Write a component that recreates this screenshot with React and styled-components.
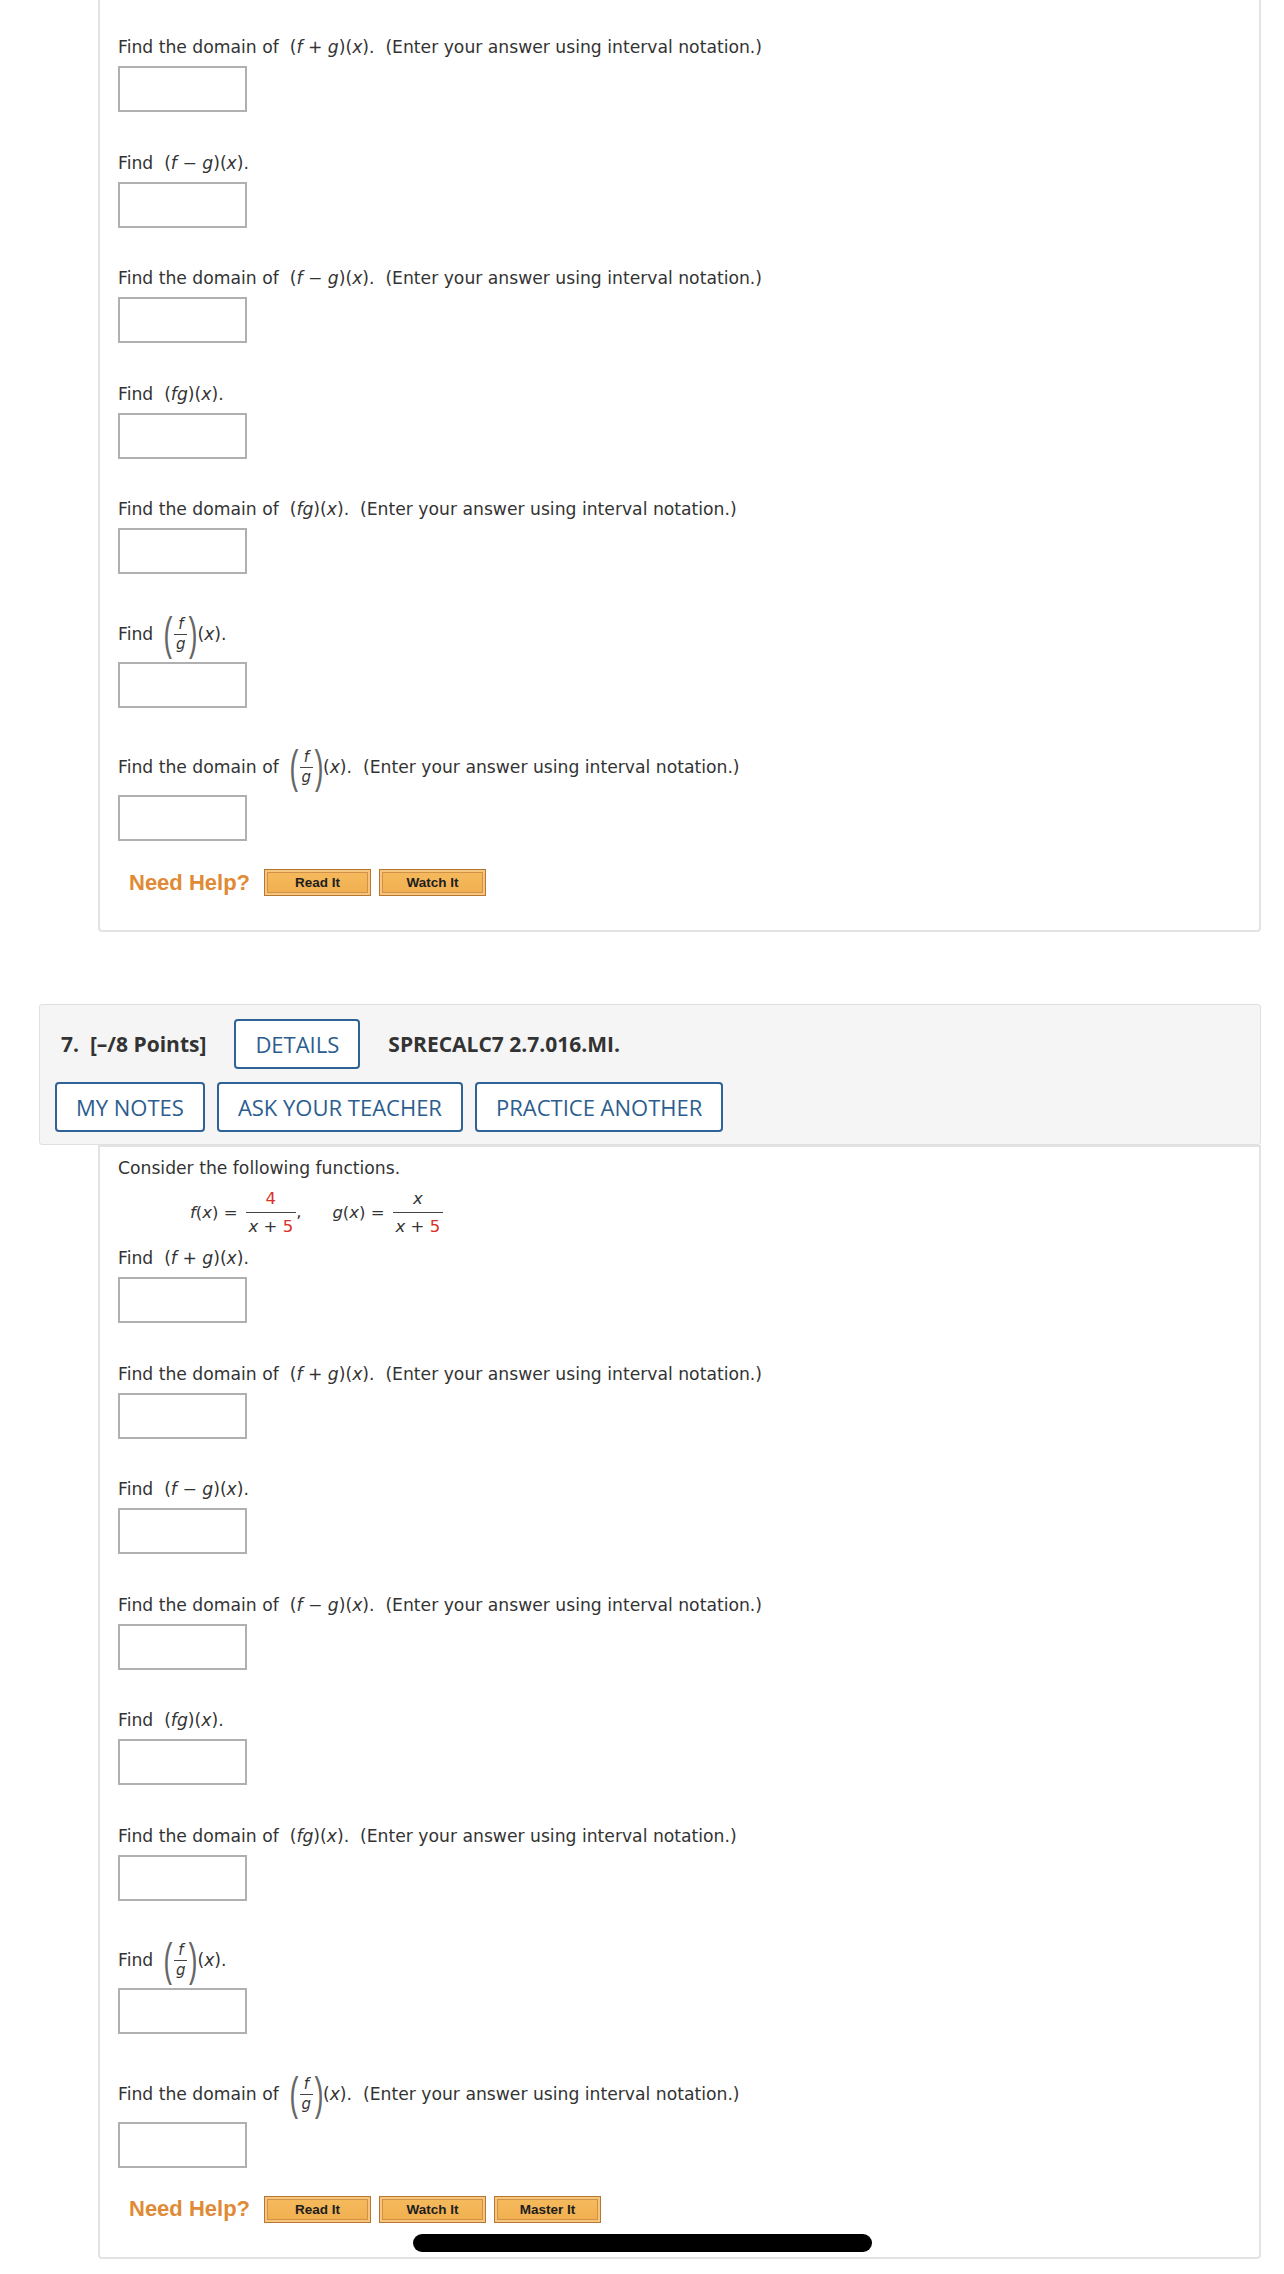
import React from "react";
import styled, { createGlobalStyle } from "styled-components";

// WebAssign style question page (mobile capture)

const GlobalStyle = createGlobalStyle`
  body {
    margin: 0;
    background: #fff;
    font-family: "DejaVu Sans", Verdana, sans-serif;
    color: #333;
  }
`;

const Page = styled.div`
  width: 1222px;
  padding-left: 39px;
  padding-bottom: 17px;
`;

const Card = styled.div`
  margin-left: 59px;
  border: 2px solid #e3e3e3;
  border-top: ${(p) => (p.$cut ? "none" : "2px solid #e3e3e3")};
  border-radius: 0 0 4px 4px;
  padding: ${(p) => (p.$cut ? "35px" : "9px")} 20px 34px 18px;
  box-sizing: border-box;
`;

const Header = styled.div`
  margin-top: 72px;
  background: #f5f5f5;
  border: 1px solid #e0e0e0;
  border-radius: 3px;
  padding: 14px 15px 12px 15px;
  display: flex;
  flex-direction: column;
  gap: 13px;
  font-family: "Open Sans", "Liberation Sans", sans-serif;
`;

const HeaderRow = styled.div`
  display: flex;
  align-items: center;
  gap: ${(p) => p.$gap || 11}px;
  padding-left: ${(p) => p.$indent || 0}px;
`;

const Title = styled.span`
  font-weight: 700;
  font-size: 21px;
  color: #333;
  white-space: pre;
`;

const OutlineButton = styled.button`
  height: 50px;
  box-sizing: border-box;
  padding: 0 19px;
  border: 2px solid #2f6296;
  border-radius: 4px;
  background: #fff;
  color: #2b5d8f;
  font-family: "Open Sans", "Liberation Sans", sans-serif;
  font-size: 22px;
  font-weight: 400;
`;

const Line = styled.div`
  font-size: 17.2px;
  line-height: 24px;
  min-height: ${(p) => (p.$tall ? "42px" : "24px")};
  display: flex;
  align-items: center;
  white-space: pre;
  color: #333;
`;

const V = styled.i`
  font-style: italic;
`;

const Red = styled.span`
  color: #d8322b;
`;

const Questions = styled.div`
  display: flex;
  flex-direction: column;
  gap: 38.5px;
`;

const Block = styled.div`
  display: flex;
  flex-direction: column;
`;

const AnswerBox = styled.div`
  margin-top: 7px;
  width: 129px;
  height: 46px;
  box-sizing: border-box;
  border: 2px solid #b0b0b0;
  background: #fff;
`;

const Paren = styled.span`
  display: inline-block;
  font-family: "Liberation Sans", Arial, sans-serif;
  font-size: 30px;
  color: #666;
  transform: scale(0.9, 1.55);
  line-height: 30px;
  margin: 0 -1px;
`;

const SmallFrac = styled.span`
  display: inline-flex;
  flex-direction: column;
  align-items: center;
  font-size: 15px;
  line-height: 18px;
  margin: 0 2px;
  & > span:first-child {
    border-bottom: 1px solid #444;
    padding: 0 4px 1px;
  }
`;

const Formula = styled.div`
  display: flex;
  align-items: center;
  height: 48px;
  margin: 12px 0 6px 72px;
  font-size: 16.5px;
  white-space: pre;
  color: #333;
  transform: translateY(-4px);
`;

const Frac = styled.span`
  display: inline-flex;
  flex-direction: column;
  align-items: center;
  line-height: 23px;
  margin: 0 3px 0 8px;
  & > span:first-child {
    border-bottom: 1px solid #444;
    align-self: stretch;
    text-align: center;
    padding: 0 3px 2px;
  }
  & > span:last-child {
    padding: 2px 3px 0;
  }
`;

const Comma = styled.span`
  margin-right: 28px;
  transform: translate(-3px, -1px);
`;

const HelpRow = styled.div`
  margin-top: 28px;
  padding-left: 11px;
  display: flex;
  align-items: center;
  gap: 8px;
`;

const HelpLabel = styled.span`
  font-family: "Liberation Sans", Arial, sans-serif;
  font-weight: 700;
  font-size: 22px;
  color: #e08a35;
  margin-right: 6px;
`;

const HelpButton = styled.button`
  width: 107px;
  height: 27px;
  box-sizing: border-box;
  border: 1px solid #b97632;
  background: linear-gradient(#f5bb5e, #f1ae4e);
  box-shadow: inset 0 0 0 2px #f6c67c, inset 0 0 0 3px #d0914a;
  font-family: "Liberation Sans", Arial, sans-serif;
  font-weight: 700;
  font-size: 13.5px;
  color: #1e1e1e;
  padding: 0;
`;

const HomeBar = styled.div`
  position: fixed;
  left: 413px;
  bottom: 22px;
  width: 459px;
  height: 18px;
  border-radius: 9px;
  background: #000;
`;

function FG() {
  return (
    <>
      <Paren>(</Paren>
      <SmallFrac>
        <span>
          <V>f</V>
        </span>
        <span>
          <V>g</V>
        </span>
      </SmallFrac>
      <Paren>)</Paren>
      (<V>x</V>)
    </>
  );
}

const NOTE = "  (Enter your answer using interval notation.)";

function questions() {
  return [
    { key: "sum", text: <>Find  (<V>f</V> + <V>g</V>)(<V>x</V>).</> },
    { key: "sumd", text: <>Find the domain of  (<V>f</V> + <V>g</V>)(<V>x</V>).{NOTE}</> },
    { key: "dif", text: <>Find  (<V>f</V> − <V>g</V>)(<V>x</V>).</> },
    { key: "difd", text: <>Find the domain of  (<V>f</V> − <V>g</V>)(<V>x</V>).{NOTE}</> },
    { key: "prod", text: <>Find  (<V>fg</V>)(<V>x</V>).</> },
    { key: "prodd", text: <>Find the domain of  (<V>fg</V>)(<V>x</V>).{NOTE}</> },
    { key: "quo", tall: true, text: <>Find  <FG />.</> },
    { key: "quod", tall: true, text: <>Find the domain of  <FG />.{NOTE}</> },
  ];
}

function QuestionList({ skip = 0 }) {
  return (
    <Questions>
      {questions()
        .slice(skip)
        .map((q) => (
          <Block key={q.key}>
            <Line $tall={q.tall}>{q.text}</Line>
            <AnswerBox />
          </Block>
        ))}
    </Questions>
  );
}

function NeedHelp({ master }) {
  return (
    <HelpRow>
      <HelpLabel>Need Help?</HelpLabel>
      <HelpButton>Read It</HelpButton>
      <HelpButton>Watch It</HelpButton>
      {master && <HelpButton>Master It</HelpButton>}
    </HelpRow>
  );
}

export default function App() {
  return (
    <Page>
      <GlobalStyle />
      <Card $cut>
        <QuestionList skip={1} />
        <NeedHelp />
      </Card>

      <Header>
        <HeaderRow $gap={28} $indent={6}>
          <Title>7.  [–/8 Points]</Title>
          <OutlineButton>DETAILS</OutlineButton>
          <Title>SPRECALC7 2.7.016.MI.</Title>
        </HeaderRow>
        <HeaderRow $gap={12}>
          <OutlineButton>MY NOTES</OutlineButton>
          <OutlineButton>ASK YOUR TEACHER</OutlineButton>
          <OutlineButton>PRACTICE ANOTHER</OutlineButton>
        </HeaderRow>
      </Header>

      <Card>
        <Line>Consider the following functions.</Line>
        <Formula>
          <V>f</V>(<V>x</V>) =
          <Frac>
            <span>
              <Red>4</Red>
            </span>
            <span>
              <V>x</V> + <Red>5</Red>
            </span>
          </Frac>
          <Comma>,</Comma>
          <V>g</V>(<V>x</V>) =
          <Frac>
            <span>
              <V>x</V>
            </span>
            <span>
              <V>x</V> + <Red>5</Red>
            </span>
          </Frac>
        </Formula>
        <QuestionList />
        <NeedHelp master />
      </Card>
      <HomeBar />
    </Page>
  );
}
